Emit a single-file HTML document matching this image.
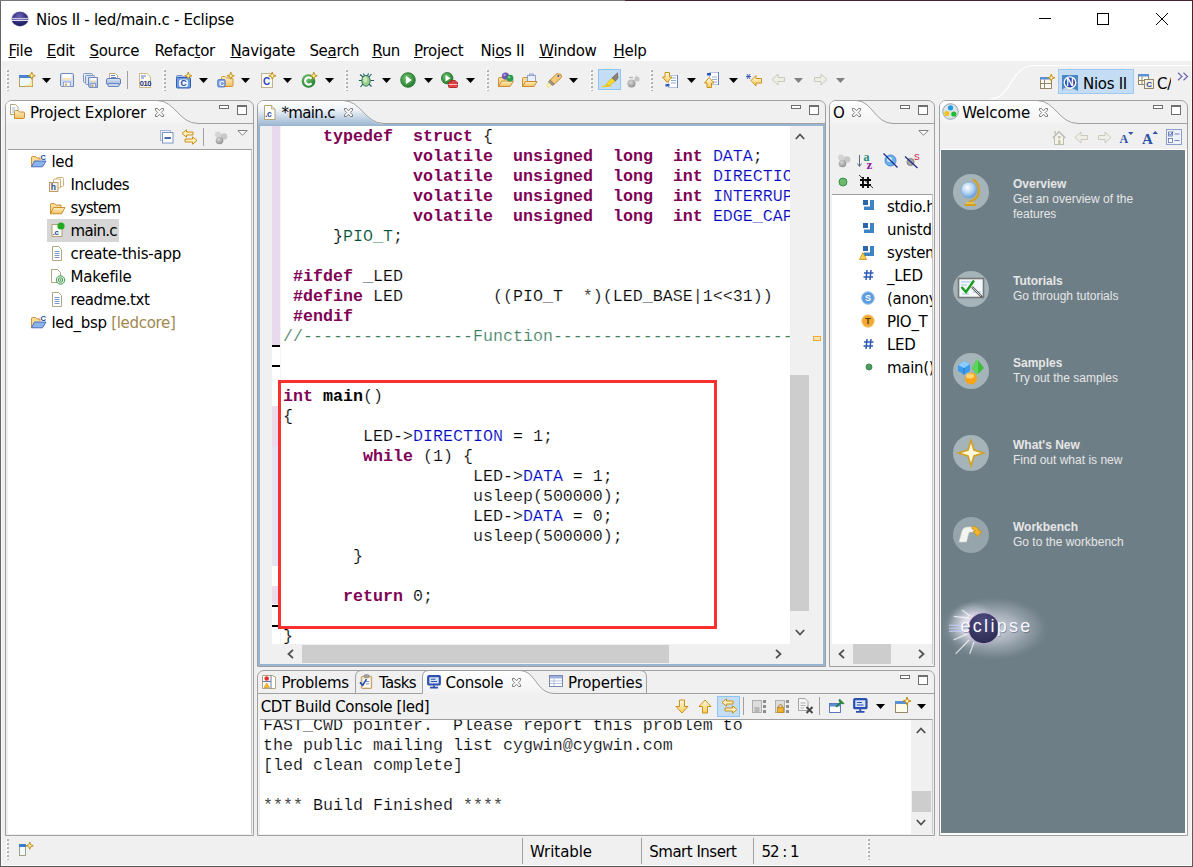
<!DOCTYPE html>
<html lang="en">
<head>
<meta charset="utf-8">
<title>Nios II - led/main.c - Eclipse</title>
<style>
html,body{margin:0;padding:0}
body{width:1193px;height:867px;position:relative;overflow:hidden;background:#f0f0f0;font-family:"DejaVu Sans","Liberation Sans",sans-serif;font-size:15px;letter-spacing:-0.3px;color:#000}
.a{position:absolute}
.t{position:absolute;white-space:pre;line-height:20px;height:20px}
.u{text-decoration:underline;text-underline-offset:1px;text-decoration-thickness:1px}
svg{position:absolute;overflow:visible}
.mono{font-family:"Liberation Mono",monospace;font-size:16.67px;line-height:20px;white-space:pre;letter-spacing:0}
.mono{-webkit-text-stroke:0.2px #fff}.mono b,.kw{-webkit-text-stroke:0}
.kw{color:#7f0055;font-weight:bold}
.fd{color:#0000c0}
.cm{color:#3f7f5f}
.ty{color:#005032}
.pnl{position:absolute;border:1px solid #a0a0a0;box-sizing:border-box;background:#f0f0f0}
.wt{position:absolute;white-space:pre;font-family:"Liberation Sans",sans-serif;font-size:12px;line-height:15px;color:#e6e6e6;letter-spacing:0}
.wt b{font-weight:bold}
</style>
</head>
<body>
<!-- ===== window frame / title / menu ===== -->
<div class="a" id="titlebg" style="left:1px;top:1px;width:1191px;height:60px;background:#fff"></div>
<!-- title bar -->
<svg style="left:10px;top:10px" width="20" height="18" viewBox="0 0 20 18">
<defs><radialGradient id="eg" cx="0.45" cy="0.3" r="0.8"><stop offset="0" stop-color="#6a62b8"/><stop offset="0.6" stop-color="#2c2a78"/><stop offset="1" stop-color="#1a1850"/></radialGradient></defs>
<ellipse cx="10" cy="9" rx="9" ry="7.8" fill="#c9b6d6" opacity=".55"/>
<ellipse cx="10" cy="9" rx="8.3" ry="7.2" fill="url(#eg)"/>
<rect x="1.5" y="7.9" width="17" height="0.9" fill="#e4e0f2"/><rect x="1.4" y="9.7" width="17.2" height="1.2" fill="#f6f4fc"/>
</svg>
<div class="t" id="ttl" style="left:36px;top:10px">Nios II - led/main.c - Eclipse</div>
<svg style="left:1030px;top:8px" width="150" height="24" viewBox="0 0 150 24" fill="none" stroke="#000" stroke-width="1">
<path d="M9 10.5H21"/><rect x="67.5" y="5.5" width="11" height="11"/><path d="M126 5L138 17M138 5L126 17"/>
</svg>

<!-- menu bar -->
<div class="t mi" id="m0" style="left:8.5px;top:41px"><span class="u">F</span>ile</div>
<div class="t mi" id="m1" style="left:46.8px;top:41px"><span class="u">E</span>dit</div>
<div class="t mi" id="m2" style="left:89.5px;top:41px"><span class="u">S</span>ource</div>
<div class="t mi" id="m3" style="left:154.4px;top:41px">Refac<span class="u">t</span>or</div>
<div class="t mi" id="m4" style="left:230.4px;top:41px"><span class="u">N</span>avigate</div>
<div class="t mi" id="m5" style="left:309.4px;top:41px">Se<span class="u">a</span>rch</div>
<div class="t mi" id="m6" style="left:372.2px;top:41px"><span class="u">R</span>un</div>
<div class="t mi" id="m7" style="left:414px;top:41px"><span class="u">P</span>roject</div>
<div class="t mi" id="m8" style="left:480.4px;top:41px">Ni<span class="u">o</span>s II</div>
<div class="t mi" id="m9" style="left:539.2px;top:41px"><span class="u">W</span>indow</div>
<div class="t mi" id="m10" style="left:613.6px;top:41px"><span class="u">H</span>elp</div>

<!--TB0-->
<!-- ===== main toolbar ===== -->
<svg width="0" height="0" style="left:0;top:0">
<defs>
<symbol id="grip" viewBox="0 0 4 23"><g fill="#fff"><rect x="0" y="0" width="2" height="2"/><rect x="0" y="4" width="2" height="2"/><rect x="0" y="8" width="2" height="2"/><rect x="0" y="12" width="2" height="2"/><rect x="0" y="16" width="2" height="2"/><rect x="0" y="20" width="2" height="2"/></g><g fill="#b2b2b2"><rect x="1" y="1" width="2" height="2"/><rect x="1" y="5" width="2" height="2"/><rect x="1" y="9" width="2" height="2"/><rect x="1" y="13" width="2" height="2"/><rect x="1" y="17" width="2" height="2"/><rect x="1" y="21" width="2" height="1"/></g></symbol>
<symbol id="dd" viewBox="0 0 9 5"><path d="M0 0H9L4.5 5Z" fill="#000"/></symbol>
<symbol id="ddg" viewBox="0 0 9 5"><path d="M0 0H9L4.5 5Z" fill="#808080"/></symbol>
<symbol id="star" viewBox="0 0 8 8"><path d="M4 0L5 3L8 4L5 5L4 8L3 5L0 4L3 3Z" fill="#fff2a8" stroke="#b8860b" stroke-width="0.9"/></symbol>
<linearGradient id="gfold" x1="0" y1="0" x2="0" y2="1"><stop offset="0" stop-color="#fdf0c4"/><stop offset="1" stop-color="#f0c060"/></linearGradient>
<linearGradient id="gblue" x1="0" y1="0" x2="0" y2="1"><stop offset="0" stop-color="#dfe8f6"/><stop offset="1" stop-color="#9db4dc"/></linearGradient>
<radialGradient id="ggreen" cx="0.4" cy="0.35" r="0.7"><stop offset="0" stop-color="#6ec46e"/><stop offset="1" stop-color="#1f7a2a"/></radialGradient>
<linearGradient id="garrow" x1="0" y1="0" x2="0" y2="1"><stop offset="0" stop-color="#fffbe0"/><stop offset="1" stop-color="#f8cc58"/></linearGradient>
<radialGradient id="ggray" cx="0.4" cy="0.35" r="0.7"><stop offset="0" stop-color="#d8d8d8"/><stop offset="1" stop-color="#8c8c8c"/></radialGradient>
</defs>
</svg>
<svg style="left:6px;top:69px" width="4" height="23"><use href="#grip"/></svg>
<svg style="left:163px;top:69px" width="4" height="23"><use href="#grip"/></svg>
<svg style="left:345px;top:69px" width="4" height="23"><use href="#grip"/></svg>
<svg style="left:486px;top:69px" width="4" height="23"><use href="#grip"/></svg>
<svg style="left:590px;top:69px" width="4" height="23"><use href="#grip"/></svg>
<svg style="left:650px;top:69px" width="4" height="23"><use href="#grip"/></svg>
<!-- new -->
<svg style="left:18px;top:72px" width="17" height="16" viewBox="0 0 17 16"><rect x="1.500" y="3.500" width="13" height="11" fill="#eefaff" stroke="#b89c58"/><rect x="1" y="3" width="14" height="3" fill="#4a84d0"/><path d="M14 7V14H7C11 14 14 11 14 7Z" fill="#fff8d0" stroke="#f0d060" stroke-width=".6"/><use href="#star" x="10" y="0" width="7.500" height="7.500"/></svg>
<svg style="left:42px;top:78px" width="9" height="5"><use href="#dd"/></svg>
<!-- save -->
<svg style="left:59px;top:72px" width="16" height="16" viewBox="0 0 16 16"><path d="M1.500 2.500Q1.500 1.500 2.500 1.500H13.500Q14.500 1.500 14.500 2.500V14.500H2.500L1.500 13.500Z" fill="#d4def0" stroke="#6f88bc"/><rect x="3.500" y="2" width="9" height="6" fill="#fff"/><rect x="3.500" y="6.300" width="9" height="1.300" fill="#ecd4a0"/><rect x="4.500" y="10" width="7" height="4.500" fill="#f4f7fc" stroke="#7f96c4" stroke-width=".8"/><rect x="6" y="11.500" width="2" height="3" fill="#d4b470"/></svg>
<!-- save all -->
<svg style="left:83px;top:72px" width="16" height="16" viewBox="0 0 16 16"><rect x=".5" y="1.5" width="9" height="9" rx="1" fill="#e4ebf7" stroke="#7f96c4"/><rect x="2.5" y="3.5" width="9" height="9" rx="1" fill="#dbe4f4" stroke="#7f96c4"/><path d="M5.5 5.5H14.5V15.500H6.5L5.500 14.500Z" fill="url(#gblue)" stroke="#6f88bc"/><rect x="7.500" y="6" width="5.500" height="3.500" fill="#fff"/><rect x="7.500" y="8.600" width="5.500" height="1" fill="#e9c98a"/><rect x="8" y="11.500" width="4.500" height="3.800" fill="#e8eef8" stroke="#6f88bc" stroke-width=".7"/><rect x="9" y="12.500" width="1.500" height="2.800" fill="#caa45a"/></svg>
<!-- print -->
<svg style="left:105px;top:72px" width="17" height="16" viewBox="0 0 17 16"><path d="M4.500 7V1.500H10.500L12.500 3.500V7" fill="#fff" stroke="#b8a070" stroke-width=".9"/><path d="M6 3.500H10M6 5.500H11" stroke="#5a78b8" stroke-width=".9"/><rect x="1.500" y="6.500" width="14" height="6" rx="1.500" fill="url(#gblue)" stroke="#5f7cb8"/><rect x="3" y="11.500" width="11" height="3" rx="1" fill="#c8d6ee" stroke="#5f7cb8" stroke-width=".9"/></svg>
<div class="a" style="left:127px;top:71px;width:1px;height:18px;background:#a0a0a0"></div>
<!-- 010 -->
<svg style="left:138px;top:72px" width="14" height="17" viewBox="0 0 14 17"><path d="M1.500 1.500H9L12.500 5V15.500H1.500Z" fill="#fdfcf4" stroke="#c8b078" stroke-width=".9"/><path d="M3 4H8M3 6H6" stroke="#5a78c8" stroke-width="1"/><text x="1.8" y="14.3" font-family="Liberation Sans,sans-serif" font-weight="bold" font-size="7.5" fill="#1c2c74" letter-spacing="-.4">010</text></svg>
<!-- new c project -->
<svg style="left:175px;top:72px" width="17" height="17" viewBox="0 0 17 17"><path d="M1.500 6V4.500Q1.500 3.500 2.500 3.500H7L8.500 5H12" fill="#b4c8ec" stroke="#5878c0" stroke-width=".8"/><rect x="1.500" y="5.500" width="14" height="10.500" rx="1" fill="#6c9ce4" stroke="#2f5cb4"/><rect x="4" y="7.500" width="9" height="7.500" rx="2" fill="#eef4fd"/><text x="5.500" y="14.200" font-family="Liberation Sans,sans-serif" font-weight="bold" font-size="8.500" fill="#1c4a9c">C</text><use href="#star" x="9.500" y="0" width="7.500" height="7.500"/></svg>
<svg style="left:199px;top:78px" width="9" height="5"><use href="#dd"/></svg>
<!-- new c folder -->
<svg style="left:217px;top:72px" width="18" height="17" viewBox="0 0 18 17"><path d="M4.500 14.500V5.500Q4.500 4.500 5.500 4.500H8L9.500 6H15Q16 6 16 7V13.500Q16 14.500 15 14.500Z" fill="url(#gfold)" stroke="#d08a28" stroke-width=".9"/><rect x=".7" y="7.500" width="7.500" height="7.500" rx="1.200" fill="#7c9ee0" stroke="#4c70c0" stroke-width=".8"/><text x="2" y="13.800" font-family="Liberation Sans,sans-serif" font-weight="bold" font-size="7.500" fill="#fff">C</text><use href="#star" x="10" y="0" width="7.500" height="7.500"/></svg>
<svg style="left:241px;top:78px" width="9" height="5"><use href="#dd"/></svg>
<!-- new c file -->
<svg style="left:260px;top:72px" width="17" height="17" viewBox="0 0 17 17"><rect x="1.500" y="1.500" width="11" height="14" fill="#fdfcf0" stroke="#b8aa88" stroke-width=".9"/><text x="3" y="12.800" font-family="Liberation Sans,sans-serif" font-weight="bold" font-size="10" fill="#2a44c8">C</text><use href="#star" x="8.500" y="0" width="7.500" height="7.500"/></svg>
<svg style="left:283px;top:78px" width="9" height="5"><use href="#dd"/></svg>
<!-- new class -->
<svg style="left:301px;top:72px" width="17" height="17" viewBox="0 0 17 17"><circle cx="7.500" cy="9" r="6.800" fill="url(#ggreen)"/><path d="M10.500 6.700A3.600 3.600 0 1 0 10.500 11.300" fill="none" stroke="#fff" stroke-width="2.200"/><use href="#star" x="9" y="0" width="7.500" height="7.500"/></svg>
<svg style="left:325px;top:78px" width="9" height="5"><use href="#dd"/></svg>
<!-- debug -->
<svg style="left:358px;top:72px" width="17" height="17" viewBox="0 0 17 17"><g stroke="#1d5a6a" stroke-width="1.100" fill="none"><path d="M5 5L2 2.500M11 5L13.500 2M4 8.500H.8M12.500 8.500H16M5 12L2.500 15M11 12L13.500 14.500M6.500 4L5.500 1.500M9.500 4L10.500 1.500"/></g><ellipse cx="8" cy="8.800" rx="4.200" ry="5.300" fill="#9ad08a" stroke="#2a6e5a" stroke-width="1"/><ellipse cx="7.200" cy="7.500" rx="2" ry="3" fill="#d4f0c4" opacity=".8"/></svg>
<svg style="left:382px;top:78px" width="9" height="5"><use href="#dd"/></svg>
<!-- run -->
<svg style="left:400px;top:72px" width="16" height="16" viewBox="0 0 16 16"><circle cx="8" cy="8" r="7.300" fill="url(#ggreen)" stroke="#1c6a26" stroke-width=".8"/><path d="M5.800 3.800L12 8L5.800 12.200Z" fill="#fff"/></svg>
<svg style="left:424px;top:78px" width="9" height="5"><use href="#dd"/></svg>
<!-- external tools -->
<svg style="left:441px;top:72px" width="18" height="17" viewBox="0 0 18 17"><circle cx="6.200" cy="6.200" r="5.700" fill="url(#ggreen)" stroke="#1c6a26" stroke-width=".8"/><path d="M4.500 3L9.500 6.200L4.500 9.500Z" fill="#fff"/><path d="M10 9.500V8.500H14V9.500" fill="none" stroke="#c02828" stroke-width="1.200"/><rect x="7.500" y="9.800" width="9" height="5.700" rx="1" fill="#e04848" stroke="#b02020" stroke-width=".9"/><rect x="7.500" y="12" width="9" height="1" fill="#f8c0c0"/></svg>
<svg style="left:466px;top:78px" width="9" height="5"><use href="#dd"/></svg>
<!-- open type -->
<svg style="left:497px;top:72px" width="18" height="16" viewBox="0 0 18 16"><path d="M1.500 14.500V6.500Q1.500 5.500 2.500 5.500H6L7.500 7H13.500V9" fill="#f8dc98" stroke="#c88424" stroke-width=".9"/><path d="M1.500 14.500L4.500 9H16.500L13 14.500Z" fill="url(#gfold)" stroke="#c88424" stroke-width=".9"/><circle cx="8.500" cy="4" r="3.600" fill="#6c56b8"/><circle cx="7.600" cy="3" r="1.300" fill="#a898e0"/><circle cx="13" cy="6.200" r="3.400" fill="#2c9a4c"/><circle cx="12.200" cy="5.300" r="1.200" fill="#7cd090"/></svg>
<!-- open task -->
<svg style="left:521px;top:72px" width="17" height="16" viewBox="0 0 17 16"><path d="M1.500 14.500V6.500Q1.500 5.500 2.500 5.500H6L7.500 7H13.500V9" fill="#f8dc98" stroke="#c88424" stroke-width=".9"/><rect x="6.500" y="3.500" width="8" height="6" fill="#e8eefa" stroke="#8a9cc8" stroke-width=".9"/><path d="M8.500 3.500V2H12.500V3.500" fill="none" stroke="#8a9cc8"/><path d="M1.500 14.500L4.500 9.500H16L13 14.500Z" fill="url(#gfold)" stroke="#c88424" stroke-width=".9"/></svg>
<!-- search -->
<svg style="left:545px;top:72px" width="18" height="17" viewBox="0 0 18 17"><path d="M1.500 14L3 15.500L8.500 10.500L5.500 8Z" fill="#fff8c8" stroke="#e8d060" stroke-width=".8"/><path d="M5 8L12 1.500L16 2.500L16.500 5.500L9.500 12Z" fill="#f4c878" stroke="#c08830" stroke-width=".9"/><path d="M4.800 8.200L9.300 12.200L7.500 13.500L3.500 10Z" fill="#a09890" stroke="#786c60" stroke-width=".7"/><circle cx="13.300" cy="4" r="1" fill="#3858b8"/></svg>
<svg style="left:569px;top:78px" width="9" height="5"><use href="#dd"/></svg>
<!-- toggle mark occurrences (selected) -->
<div class="a" style="left:598px;top:69px;width:23px;height:21px;box-sizing:border-box;background:#c4ddf4;border:1px solid #8cc4f4"></div>
<svg style="left:601px;top:72px" width="18" height="16" viewBox="0 0 18 16"><path d="M1 14.500Q5 14.800 10 13.500" fill="none" stroke="#f0cc20" stroke-width="1.600"/><path d="M4.500 13L11 6L14.500 9L8 13.500Z" fill="#fadc30" stroke="#d8b010" stroke-width=".7"/><path d="M11 6L16.500 .8L17 6L14.500 9Z" fill="#8c8478" stroke="#6c6458" stroke-width=".7"/></svg>
<!-- gray balls -->
<svg style="left:627px;top:75px" width="13" height="13" viewBox="0 0 13 13"><circle cx="4.500" cy="8.500" r="4" fill="url(#ggray)"/><path d="M2 2.500H6" stroke="#b0b0b0" stroke-width="1.200"/><circle cx="10" cy="4" r="2.600" fill="#c4c4c4"/><circle cx="9" cy="1.500" r="1" fill="#d0d0d0"/></svg>
<!-- next annotation -->
<svg style="left:662px;top:71px" width="17" height="18" viewBox="0 0 17 18"><rect x="6.500" y="4.500" width="9" height="12" fill="#fff" stroke="#a8b8d8" stroke-width=".8"/><path d="M9 7H14M9 9.500H14M9 12H14" stroke="#8aa0d0" stroke-width=".9"/><rect x="3.500" y="13" width="4" height="2.500" fill="#2c5cc0"/><path d="M15.500 4V17" stroke="#5878c0" stroke-width=".9"/><path d="M3 1.500H7.500V6H10L5.200 11.500L.5 6H3Z" fill="url(#garrow)" stroke="#c8860c" stroke-width=".9"/></svg>
<svg style="left:687px;top:78px" width="9" height="5"><use href="#dd"/></svg>
<!-- prev annotation -->
<svg style="left:704px;top:71px" width="17" height="18" viewBox="0 0 17 18"><rect x="5.500" y="1.500" width="9" height="12" fill="#fff" stroke="#a8b8d8" stroke-width=".8"/><path d="M8 6H13M8 8.500H13M8 11H13" stroke="#8aa0d0" stroke-width=".9"/><rect x="3" y="2" width="4" height="2.500" fill="#2c5cc0"/><path d="M14.500 1V14" stroke="#5878c0" stroke-width=".9"/><path d="M3 16.500H7.500V12H10L5.200 6.500L.5 12H3Z" fill="url(#garrow)" stroke="#c8860c" stroke-width=".9"/></svg>
<svg style="left:729px;top:78px" width="9" height="5"><use href="#dd"/></svg>
<!-- last edit location -->
<svg style="left:745px;top:73px" width="18" height="14" viewBox="0 0 18 14"><path d="M6 7.500L11 2.500V5.500H16.500V10H11V13Z" fill="url(#garrow)" stroke="#c8860c" stroke-width=".9"/><path d="M1 3.500H6M2 1L5 6M5 1L2 6" stroke="#2c4cb0" stroke-width=".9"/></svg>
<!-- back / forward disabled -->
<svg style="left:771px;top:73px" width="15" height="13" viewBox="0 0 15 13"><path d="M1 6.500L7 1V4.500H13.500V8.500H7V12Z" fill="#eeeee6" stroke="#c4c4b8" stroke-width=".9"/></svg>
<svg style="left:794px;top:78px" width="9" height="5"><use href="#ddg"/></svg>
<svg style="left:813px;top:73px" width="15" height="13" viewBox="0 0 15 13"><path d="M14 6.500L8 1V4.500H1.500V8.500H8V12Z" fill="#eeeee6" stroke="#c4c4b8" stroke-width=".9"/></svg>
<svg style="left:836px;top:78px" width="9" height="5"><use href="#ddg"/></svg>
<!-- perspective switcher -->
<svg style="left:990px;top:61px" width="202" height="40" viewBox="0 0 202 40" fill="none"><path d="M0 38C22 38 20 4.500 44 4.500H201" stroke="#fff" stroke-width="1.200"/></svg>
<svg style="left:1039px;top:74px" width="16" height="16" viewBox="0 0 16 16"><rect x="1.500" y="3.500" width="11" height="11" fill="#fbfaf2" stroke="#8a7c5c" stroke-width=".9"/><rect x="1" y="3" width="12" height="2.500" fill="#5b8fd6"/><path d="M5.500 5.500V14.500M1.500 9.500H12.500" stroke="#8a7c5c" stroke-width=".9"/><use href="#star" x="8.500" y="0" width="7.500" height="7.500"/></svg>
<div class="a" style="left:1058px;top:69px;width:76px;height:25px;box-sizing:border-box;background:#c4ddf4;border:1px solid #9ccaf2"></div>
<svg style="left:1062px;top:75px" width="16" height="16" viewBox="0 0 17 17"><rect x="0" y="0" width="17" height="17" fill="#4c86c4"/><path d="M0 17Q2 9 17 17Z" fill="#bcd4ec"/><circle cx="8.500" cy="8" r="6.800" fill="#fff"/><circle cx="8.500" cy="8" r="5.300" fill="#1c3ca8"/><text x="4.600" y="12" font-family="Liberation Sans,sans-serif" font-weight="bold" font-size="11" fill="#fff">N</text></svg>
<div class="t" id="pnios" style="left:1083px;top:74px">Nios II</div>
<svg style="left:1138px;top:73px" width="16" height="16" viewBox="0 0 16 16"><rect x=".5" y="1.500" width="10" height="10" fill="#fbfaf2" stroke="#8a7c5c" stroke-width=".9"/><rect x="0" y="1" width="11" height="2.500" fill="#5b8fd6"/><path d="M4 3.500V11.500M.5 7.500H10.500" stroke="#8a7c5c" stroke-width=".9"/><rect x="6.500" y="6.500" width="9" height="9" fill="#f4f0dc" stroke="#8a7c5c" stroke-width=".9"/><text x="8.300" y="14.300" font-family="Liberation Sans,sans-serif" font-weight="bold" font-size="8" fill="#2a44a8">C</text></svg>
<div class="t" id="pcc" style="left:1157px;top:74px;width:14px;overflow:hidden">C/C++</div>
<svg style="left:1177px;top:72px" width="12" height="9" viewBox="0 0 12 9" fill="none" stroke="#6a68b0" stroke-width="1.200"><path d="M1 .8L5 4.500L1 8.200M6.500 .8L10.500 4.500L6.500 8.200"/></svg>
<!--TB1-->
<!--EX0-->
<!-- ===== Project Explorer ===== -->
<svg width="0" height="0" style="left:0;top:0"><defs>
<linearGradient id="gtab" x1="0" y1="0" x2="0" y2="1"><stop offset="0" stop-color="#ffffff"/><stop offset="1" stop-color="#f2f2f2"/></linearGradient>
<linearGradient id="gtaba" x1="0" y1="0" x2="0" y2="1"><stop offset="0" stop-color="#ffffff"/><stop offset=".35" stop-color="#eef3f9"/><stop offset="1" stop-color="#99b4d1"/></linearGradient>
<symbol id="vx" viewBox="0 0 11 11"><path d="M1.500 1.500L3.500 1.500L5.500 3.800L7.500 1.500L9.500 1.500L9.500 3.200L7.300 5.500L9.500 7.800L9.500 9.500L7.500 9.500L5.500 7.200L3.500 9.500L1.500 9.500L1.500 7.800L3.700 5.500L1.500 3.200Z" fill="#fff" stroke="#6e6e6e" stroke-width=".9"/></symbol>
<symbol id="vmin" viewBox="0 0 10 5"><rect x=".5" y=".5" width="9" height="3" fill="#fff" stroke="#6e6e6e"/></symbol>
<symbol id="vmax" viewBox="0 0 11 11"><rect x=".5" y=".5" width="9" height="9" fill="#fff" stroke="#6e6e6e"/><rect x="0" y="0" width="10" height="2" fill="#6e6e6e"/></symbol>
<symbol id="vmenu" viewBox="0 0 11 6"><path d="M.8 .5H10.200L5.500 5.200Z" fill="#fff" stroke="#6e6e6e" stroke-width=".9"/></symbol>
<symbol id="cprj" viewBox="0 0 17 14"><path d="M1.500 12.500V3.500Q1.500 2.500 2.500 2.500H5.500L7 4H10V6" fill="#f8dc98" stroke="#c88424" stroke-width=".9"/><path d="M1.500 12.800L4.500 7H16L12.500 12.800Z" fill="#8cb4ec" stroke="#3c64b8" stroke-width=".9"/><text x="10.500" y="5.500" font-family="Liberation Sans,sans-serif" font-weight="bold" font-size="7.500" fill="#1c4a9c">C</text></symbol>
<symbol id="txtf" viewBox="0 0 12 15"><path d="M1.500 .5H7.500L10.500 3.500V14.500H1.500Z" fill="#fff" stroke="#a89c78" stroke-width=".9"/><path d="M3.500 5.500H8.500M3.500 7.500H8.500M3.500 9.500H8.500M3.500 11.500H8.500" stroke="#7c98d0" stroke-width="1"/></symbol>
</defs></svg>
<div class="pnl" style="left:5px;top:100px;width:249px;height:736px;border-radius:7px 7px 0 0"></div>
<svg style="left:5px;top:100px" width="249" height="25" viewBox="0 0 249 25"><path d="M1 24V7Q1 1 7 1H152C170 1 174 23.500 193 23.500H1Z" fill="url(#gtab)"/><path d="M152 .5C170 .5 174 23.500 193 23.500H248.500" fill="none" stroke="#a0a0a0"/></svg>
<div class="a" style="left:8px;top:149px;width:244px;height:685px;background:#fff;border-top:1px solid #a0a0a0;border-right:1px solid #c8c8c8;box-sizing:border-box"></div>
<svg style="left:10px;top:104px" width="16" height="16" viewBox="0 0 16 16"><path d="M.5 .5H5.500L8 3V10.500H.5Z" fill="#fff" stroke="#a89c78" stroke-width=".9"/><path d="M2 4H5M2 6H5M2 8H4" stroke="#8ca4d8" stroke-width=".8"/><path d="M4.500 14.500V7.500Q4.500 6.500 5.500 6.500H8L9.500 8H13.500Q14.500 8 14.500 9V13.500Q14.500 14.500 13.500 14.500Z" fill="url(#gfold)" stroke="#c88424" stroke-width=".9"/></svg>
<div class="t" id="pe" style="left:30px;top:103px;letter-spacing:-0.16px">Project Explorer</div>
<svg style="left:154px;top:107px" width="11" height="11"><use href="#vx"/></svg>
<svg style="left:219px;top:105px" width="10" height="5"><use href="#vmin"/></svg>
<svg style="left:237px;top:105px" width="11" height="11"><use href="#vmax"/></svg>
<!-- view toolbar -->
<svg style="left:160px;top:130px" width="14" height="14" viewBox="0 0 14 14"><rect x=".5" y=".5" width="10" height="10" fill="#eef2fa" stroke="#a8b8d8"/><rect x="2.500" y="2.500" width="10.500" height="10.500" fill="#fff" stroke="#7c94c4"/><path d="M4.500 8H11" stroke="#1c4a9c" stroke-width="1.600"/></svg>
<svg style="left:181px;top:129px" width="17" height="17" viewBox="0 0 17 17"><path d="M1 4.500L5.500 .8V3H12V6H5.500V8.200Z" fill="#fdf0b8" stroke="#c8860c" stroke-width=".9"/><path d="M16 11.500L11.500 7.800V10H4V13H11.500V15.200Z" fill="#fdf0b8" stroke="#c8860c" stroke-width=".9"/></svg>
<div class="a" style="left:203px;top:128px;width:1px;height:18px;background:#a0a0a0"></div>
<svg style="left:214px;top:131px" width="14" height="14" viewBox="0 0 14 14"><circle cx="4" cy="3.500" r="3" fill="#d4d4d4"/><circle cx="10" cy="5.500" r="3.300" fill="#c8c8c8"/><circle cx="5.500" cy="9.500" r="3.800" fill="url(#ggray)"/></svg>
<svg style="left:237px;top:130px" width="11" height="6"><use href="#vmenu"/></svg>
<!-- tree -->
<div class="a" style="left:47px;top:219px;width:72px;height:23px;background:#d6d6d6"></div>
<svg style="left:30px;top:154px" width="17" height="14"><use href="#cprj"/></svg>
<div class="t" style="left:51.500px;top:152px">led</div>
<svg style="left:49px;top:177px" width="16" height="15" viewBox="0 0 16 15"><rect x="7.500" y=".5" width="7" height="9" rx="1" fill="#fff" stroke="#c8a868" stroke-width=".9"/><rect x="4.500" y="2" width="7" height="9" rx="1" fill="#fff" stroke="#c8a868" stroke-width=".9"/><rect x=".5" y="5.500" width="8.500" height="9" fill="#f4f0e4" stroke="#b8925c" stroke-width=".9"/><text x="1.800" y="13" font-family="Liberation Sans,sans-serif" font-weight="bold" font-size="8.500" fill="#34508c">h</text></svg>
<div class="t" style="left:70.6px;top:175px;letter-spacing:-0.48px">Includes</div>
<svg style="left:49px;top:202px" width="17" height="13" viewBox="0 0 17 13"><path d="M1.500 11.500V2.500Q1.500 1.500 2.500 1.500H5.500L7 3H12V5.500" fill="#f8dc98" stroke="#c88424" stroke-width=".9"/><path d="M1.500 11.800L4.500 5.500H16L12.500 11.800Z" fill="url(#gfold)" stroke="#c88424" stroke-width=".9"/></svg>
<div class="t" style="left:70.6px;top:198px;letter-spacing:-0.76px">system</div>
<svg style="left:50px;top:222px" width="15" height="16" viewBox="0 0 15 16"><rect x="2" y="2.500" width="10" height="12" fill="#fdfcf4" stroke="#b09868" stroke-width=".9"/><text x="2.500" y="12.500" font-family="Liberation Sans,sans-serif" font-weight="bold" font-size="8" fill="#2c4c9c">.c</text><circle cx="11" cy="4" r="3.600" fill="#22aa22"/></svg>
<div class="t" style="left:70.6px;top:221px;letter-spacing:-0.72px">main.c</div>
<svg style="left:51px;top:246px" width="12" height="15"><use href="#txtf"/></svg>
<div class="t" style="left:70.6px;top:244px;letter-spacing:-0.24px">create-this-app</div>
<svg style="left:50px;top:269px" width="16" height="16" viewBox="0 0 16 16"><path d="M1.500 .5H7.500L10.500 3.500V13.500H1.500Z" fill="#fff" stroke="#a89c78" stroke-width=".9"/><circle cx="10.500" cy="11" r="4.200" fill="#e8f4e8" stroke="#2c8c3c" stroke-width=".9"/><circle cx="10.500" cy="11" r="2.200" fill="none" stroke="#2c8c3c" stroke-width=".9"/><circle cx="10.500" cy="11" r=".8" fill="#2c8c3c"/></svg>
<div class="t" style="left:70.6px;top:267px;letter-spacing:-0.18px">Makefile</div>
<svg style="left:51px;top:292px" width="12" height="15"><use href="#txtf"/></svg>
<div class="t" style="left:70.6px;top:290px;letter-spacing:-0.42px">readme.txt</div>
<svg style="left:30px;top:315px" width="17" height="14"><use href="#cprj"/></svg>
<div class="t" style="left:51.500px;top:313px">led_bsp <span style="color:#a08850">[ledcore]</span></div>
<!--EX1-->
<!--ED0-->
<!-- ===== editor ===== -->
<div class="pnl" style="left:257px;top:100px;width:569px;height:567px;border-radius:7px 7px 0 0;background:#f0f0f0"></div>
<div class="a" style="left:258px;top:124px;width:567px;height:542px;box-sizing:border-box;border:2px solid #99b4d1;background:#f0f0f0"></div>
<svg style="left:257px;top:100px" width="569" height="26" viewBox="0 0 569 26"><path d="M1 26V7Q1 1 7 1H86C104 1 108 24 127 24H568V26Z" fill="url(#gtaba)"/><path d="M127 24H568V26H127Z" fill="#99b4d1"/><path d="M86 .5C104 .5 108 23.500 127 23.500H568" fill="none" stroke="#a0a0a0"/></svg>
<svg style="left:264px;top:105px" width="12" height="15" viewBox="0 0 12 15"><path d="M.5 .5H7.500L11 4V14.500H.5Z" fill="#fdfcf6" stroke="#b09868" stroke-width=".9"/><path d="M7.500 .5V4H11" fill="#f0e4c4" stroke="#b09868" stroke-width=".7"/><text x="1" y="11.500" font-family="Liberation Sans,sans-serif" font-weight="bold" font-size="8.500" fill="#2c4c9c">.c</text></svg>
<div class="t" id="edtab" style="left:281.4px;top:103px;letter-spacing:-0.63px">*main.c</div>
<svg style="left:343px;top:107px" width="11" height="11"><use href="#vx"/></svg>
<svg style="left:791px;top:105px" width="10" height="5"><use href="#vmin"/></svg>
<svg style="left:809px;top:105px" width="11" height="11"><use href="#vmax"/></svg>
<div class="a" style="left:272px;top:126px;width:518px;height:518px;background:#fff;overflow:hidden">
<div class="a" style="left:0;top:0px;width:8px;height:220px;background:#e9d9ec"></div>
<div class="a" style="left:0;top:280px;width:8px;height:40px;background:#ecdcec"></div>
<div class="a" style="left:0;top:320px;width:8px;height:120px;background:#e4e4f2"></div>
<div class="a" style="left:0;top:460px;width:8px;height:18px;background:#ecdcec"></div>
<div class="a" style="left:0;top:219px;width:8px;height:2px;background:#000"></div>
<div class="a" style="left:0;top:239px;width:8px;height:2px;background:#000"></div>
<div class="a" style="left:0;top:479px;width:8px;height:2px;background:#000"></div>
<div class="a" style="left:0;top:499px;width:8px;height:2px;background:#000"></div>
<div class="a" style="left:8px;top:0;width:1px;height:518px;background:#f4f4f4"></div>
<pre class="mono a" id="code" style="left:11px;top:1px;margin:0">    <span class="kw">typedef</span>  <span class="kw">struct</span> {
             <span class="kw">volatile</span>  <span class="kw">unsigned</span>  <span class="kw">long</span>  <span class="kw">int</span> <span class="fd">DATA</span>;
             <span class="kw">volatile</span>  <span class="kw">unsigned</span>  <span class="kw">long</span>  <span class="kw">int</span> <span class="fd">DIRECTION</span>;
             <span class="kw">volatile</span>  <span class="kw">unsigned</span>  <span class="kw">long</span>  <span class="kw">int</span> <span class="fd">INTERRUPT_MASK</span>;
             <span class="kw">volatile</span>  <span class="kw">unsigned</span>  <span class="kw">long</span>  <span class="kw">int</span> <span class="fd">EDGE_CAPTURE</span>;
     }<span class="ty">PIO_T</span>;

 <span class="kw">#ifdef</span> _LED
 <span class="kw">#define</span> LED         ((PIO_T  *)(LED_BASE|1&lt;&lt;31))
 <span class="kw">#endif</span>
<span class="cm">//-----------------Function----------------------------------------</span>


<span class="kw">int</span> <b>main</b>()
{
        LED-&gt;<span class="fd">DIRECTION</span> = 1;
        <span class="kw">while</span> (1) {
                   LED-&gt;<span class="fd">DATA</span> = 1;
                   usleep(500000);
                   LED-&gt;<span class="fd">DATA</span> = 0;
                   usleep(500000);
       }

      <span class="kw">return</span> 0;

}</pre>
<div class="a" style="left:6px;top:254px;width:439px;height:249px;box-sizing:border-box;border:3px solid #f93030"></div>
</div>
<div class="a" style="left:790px;top:375px;width:19px;height:236px;background:#cdcdcd"></div>
<svg style="left:795px;top:133px" width="10" height="7" viewBox="0 0 10 7"><path d="M.8 6L5 1.500L9.200 6" fill="none" stroke="#505050" stroke-width="1.800"/></svg>
<svg style="left:795px;top:629px" width="10" height="7" viewBox="0 0 10 7"><path d="M.8 1L5 5.500L9.200 1" fill="none" stroke="#505050" stroke-width="1.800"/></svg>
<div class="a" style="left:302px;top:645px;width:367px;height:18px;background:#cdcdcd"></div>
<svg style="left:287px;top:649px" width="7" height="10" viewBox="0 0 7 10"><path d="M6 .8L1.500 5L6 9.200" fill="none" stroke="#505050" stroke-width="1.800"/></svg>
<svg style="left:775px;top:649px" width="7" height="10" viewBox="0 0 7 10"><path d="M1 .8L5.500 5L1 9.200" fill="none" stroke="#505050" stroke-width="1.800"/></svg>
<div class="a" style="left:813px;top:336px;width:8px;height:5px;box-sizing:border-box;border:1px solid #f0a830;background:#fbe4b0"></div>
<!--ED1-->
<!--OU0-->
<!-- ===== Outline ===== -->
<div class="pnl" style="left:829px;top:100px;width:106px;height:567px;border-radius:7px 7px 0 0"></div>
<svg style="left:829px;top:100px" width="106" height="25" viewBox="0 0 106 25"><path d="M1 24V7Q1 1 7 1H27C43 1 46 23.500 64 23.500H1Z" fill="url(#gtab)"/><path d="M27 .5C43 .5 46 23.500 64 23.500H105.500" fill="none" stroke="#a0a0a0"/></svg>
<div class="t" style="left:833px;top:103px">O</div>
<svg style="left:851px;top:107px" width="11" height="11"><use href="#vx"/></svg>
<svg style="left:900px;top:105px" width="10" height="5"><use href="#vmin"/></svg>
<svg style="left:918px;top:105px" width="11" height="11"><use href="#vmax"/></svg>
<svg style="left:918px;top:130px" width="11" height="6"><use href="#vmenu"/></svg>
<!-- outline toolbar -->
<svg style="left:837px;top:154px" width="14" height="14" viewBox="0 0 14 14"><circle cx="4" cy="3.500" r="3" fill="#d4d4d4"/><circle cx="10" cy="5.500" r="3.300" fill="#c8c8c8"/><circle cx="5.500" cy="9.500" r="3.800" fill="url(#ggray)"/></svg>
<svg style="left:857px;top:152px" width="19" height="17" viewBox="0 0 19 17"><path d="M2.500 3V14M.5 11.500L2.500 14.500L4.500 11.500" fill="none" stroke="#5a6a80" stroke-width="1"/><text x="6.500" y="8.500" font-family="Liberation Serif,serif" font-weight="bold" font-size="12" fill="#1c8c7c">a</text><text x="9.500" y="16.500" font-family="Liberation Serif,serif" font-weight="bold" font-size="13" fill="#8c1c9c">z</text></svg>
<svg style="left:882px;top:152px" width="17" height="17" viewBox="0 0 17 17"><circle cx="8.500" cy="8.500" r="5.500" fill="#6cb0ec" stroke="#3c84d0" stroke-width=".9"/><circle cx="7.500" cy="7.500" r="2.500" fill="#d4ecfc"/><path d="M1.500 1.500L15.500 15.500" stroke="#1c2c8c" stroke-width="1.200"/></svg>
<svg style="left:904px;top:152px" width="17" height="17" viewBox="0 0 17 17"><circle cx="6.500" cy="10" r="3.600" fill="#a8a8a8" stroke="#787878" stroke-width=".8"/><path d="M1 4.500L13.500 16" stroke="#1c2c8c" stroke-width="1.200"/><text x="10" y="7.500" font-family="Liberation Sans,sans-serif" font-size="8.500" fill="#d0103c">S</text></svg>
<svg style="left:838px;top:177px" width="10" height="10" viewBox="0 0 10 10"><circle cx="5" cy="5" r="4" fill="#6cb86c" stroke="#2c8c3c" stroke-width=".9"/></svg>
<svg style="left:858px;top:174px" width="16" height="16" viewBox="0 0 16 16"><path d="M5 3V14M10 3V14M2 6H13M2 11H13" stroke="#000" stroke-width="1.800"/><path d="M1 1L15 14" stroke="#303030" stroke-width="1"/></svg>
<!-- outline tree -->
<div class="a" style="left:832px;top:194px;width:101px;height:470px;background:#fff;border-top:1px solid #a0a0a0;border-right:1px solid #c8c8c8;box-sizing:border-box;overflow:hidden">
<svg width="0" height="0" style="left:0;top:0"><defs>
<symbol id="oinc" viewBox="0 0 12 11"><rect x="0" y="0" width="5" height="5" fill="#2a66a8"/><path d="M7 0H11V10H1V6.500H7Z" fill="#3f83c4"/></symbol>
<symbol id="ohash" viewBox="0 0 11 12"><path d="M4 1L3 11M8 1L7 11M1 4H10.500M.5 8H10" stroke="#2c5cb4" stroke-width="1.500" fill="none"/></symbol>
</defs></svg>
<svg style="left:31px;top:5px" width="12" height="11"><use href="#oinc"/></svg><div class="t" style="left:55px;top:2px">stdio.h</div>
<svg style="left:31px;top:28px" width="12" height="11"><use href="#oinc"/></svg><div class="t" style="left:55px;top:25px">unistd.h</div>
<svg style="left:31px;top:51px" width="12" height="11"><use href="#oinc"/></svg><svg style="left:27px;top:57px" width="8" height="8" viewBox="0 0 8 8"><path d="M4 .5L7.500 7.500H.5Z" fill="#f8d048" stroke="#c88c1c" stroke-width=".8"/></svg><div class="t" style="left:55px;top:48px">system.h</div>
<svg style="left:31px;top:74px" width="11" height="12"><use href="#ohash"/></svg><div class="t" style="left:55px;top:71px">_LED</div>
<svg style="left:29px;top:96px" width="14" height="14" viewBox="0 0 14 14"><circle cx="7" cy="7" r="6.300" fill="#5c9cdc" stroke="#9cc4ec" stroke-width="1"/><text x="4" y="10.200" font-family="Liberation Sans,sans-serif" font-weight="bold" font-size="9" fill="#fff">S</text></svg><div class="t" style="left:55px;top:94px">(anonymous)</div>
<svg style="left:29px;top:119px" width="14" height="14" viewBox="0 0 14 14"><circle cx="7" cy="7" r="6.300" fill="#f0a830" stroke="#f8d48c" stroke-width="1"/><text x="4.300" y="10.200" font-family="Liberation Sans,sans-serif" font-weight="bold" font-size="9" fill="#5c3c0c">T</text></svg><div class="t" style="left:55px;top:117px">PIO_T</div>
<svg style="left:31px;top:143px" width="11" height="12"><use href="#ohash"/></svg><div class="t" style="left:55px;top:140px">LED</div>
<svg style="left:33px;top:168px" width="8" height="8" viewBox="0 0 8 8"><circle cx="4" cy="4" r="3" fill="#4c9c5c" stroke="#2c7c3c" stroke-width=".8"/></svg><div class="t" style="left:55px;top:163px">main()</div>
<div class="a" style="left:0;top:449px;width:100px;height:20px;background:#f0f0f0"></div>
<div class="a" style="left:21px;top:449px;width:38px;height:20px;background:#cdcdcd"></div>
<svg style="left:6px;top:454px" width="7" height="10" viewBox="0 0 7 10"><path d="M6 .8L1.500 5L6 9.200" fill="none" stroke="#505050" stroke-width="1.800"/></svg>
<svg style="left:86px;top:454px" width="7" height="10" viewBox="0 0 7 10"><path d="M1 .8L5.500 5L1 9.200" fill="none" stroke="#505050" stroke-width="1.800"/></svg>
</div>
<!--OU1-->
<!--WE0-->
<!-- ===== Welcome ===== -->
<div class="pnl" style="left:939px;top:100px;width:249px;height:736px;border-radius:7px 7px 0 0"></div>
<svg style="left:939px;top:100px" width="249" height="25" viewBox="0 0 249 25"><path d="M1 24V7Q1 1 7 1H98C116 1 120 23.500 139 23.500H1Z" fill="url(#gtab)"/><path d="M98 .5C116 .5 120 23.500 139 23.500H248.500" fill="none" stroke="#a0a0a0"/></svg>
<svg style="left:942px;top:103px" width="17" height="17" viewBox="0 0 17 17"><circle cx="8.500" cy="8.500" r="7.800" fill="#dce4e8" stroke="#8c9ca4" stroke-width=".9"/><circle cx="8.500" cy="4.800" r="2.600" fill="#1c9ce4"/><circle cx="4.800" cy="10.500" r="2.600" fill="#f0c420"/><circle cx="11.800" cy="11" r="2.600" fill="#1cbc2c"/></svg>
<div class="t" style="left:962.2px;top:103px;letter-spacing:-0.08px">Welcome</div>
<svg style="left:1038px;top:107px" width="11" height="11"><use href="#vx"/></svg>
<svg style="left:1153px;top:105px" width="10" height="5"><use href="#vmin"/></svg>
<svg style="left:1171px;top:105px" width="11" height="11"><use href="#vmax"/></svg>
<!-- welcome toolbar -->
<svg style="left:1052px;top:129px" width="15" height="17" viewBox="0 0 15 17"><path d="M2.500 8.500V15.500H11.500V8.500" fill="#f4f4ec" stroke="#b4b4a8" stroke-width=".9"/><path d="M.8 9L7 2.500L13.200 9" fill="none" stroke="#b4b4a8" stroke-width="1.200"/><path d="M3 2V5" stroke="#b4b4a8" stroke-width="1.200"/><rect x="6" y="11" width="2.500" height="4.500" fill="#c4c8a8"/><rect x="6" y="7" width="2.500" height="2.500" fill="#c4c8a8"/></svg>
<svg style="left:1074px;top:131px" width="15" height="13" viewBox="0 0 15 13"><path d="M1 6.500L7 1V4.500H13.500V8.500H7V12Z" fill="#eeeee6" stroke="#c4c4b8" stroke-width=".9"/></svg>
<svg style="left:1097px;top:131px" width="15" height="13" viewBox="0 0 15 13"><path d="M14 6.500L8 1V4.500H1.500V8.500H8V12Z" fill="#eeeee6" stroke="#c4c4b8" stroke-width=".9"/></svg>
<svg style="left:1119px;top:130px" width="16" height="14" viewBox="0 0 16 14"><text x=".5" y="12.500" font-family="Liberation Serif,serif" font-weight="bold" font-size="12" fill="#2c54a4">A</text><path d="M9 2H14.500L11.800 5Z" fill="#2c54a4"/></svg>
<svg style="left:1142px;top:129px" width="17" height="16" viewBox="0 0 17 16"><text x="0" y="14.500" font-family="Liberation Serif,serif" font-weight="bold" font-size="15" fill="#2c54a4">A</text><path d="M10.500 5H16L13.200 2Z" fill="#2c54a4"/></svg>
<svg style="left:1166px;top:129px" width="16" height="16" viewBox="0 0 16 16"><rect x=".5" y=".5" width="15" height="15" fill="#eef2fa" stroke="#8c9ccc"/><rect x="2.500" y="3" width="4" height="4" fill="#fff" stroke="#5c74b4" stroke-width=".8"/><rect x="2.500" y="9.500" width="4" height="4" fill="#fff" stroke="#5c74b4" stroke-width=".8"/><path d="M3 4.500L4.500 6.200L7 2.500" fill="none" stroke="#2c44a4" stroke-width=".9"/><path d="M8.500 5H13.500M8.500 11.500H13.500" stroke="#5c74b4" stroke-width=".9"/></svg>
<!-- welcome content -->
<div class="a" style="left:940px;top:149px;width:247px;height:686px;background:#fff"></div>
<div class="a" id="wel" style="left:941px;top:150px;width:244px;height:683px;background:#6d7e86;overflow:hidden">
<svg width="0" height="0" style="left:0;top:0"><defs>
<radialGradient id="gglow" cx=".5" cy=".5" r=".5"><stop offset="0" stop-color="#fff" stop-opacity="1"/><stop offset=".4" stop-color="#ece8f6" stop-opacity=".85"/><stop offset=".72" stop-color="#c4cad6" stop-opacity=".5"/><stop offset="1" stop-color="#9aa6b0" stop-opacity="0"/></radialGradient>
<radialGradient id="gglow2" cx=".5" cy=".5" r=".5"><stop offset="0" stop-color="#ececf4" stop-opacity=".8"/><stop offset=".45" stop-color="#ccd0dc" stop-opacity=".6"/><stop offset=".78" stop-color="#a8b2bc" stop-opacity=".32"/><stop offset="1" stop-color="#8c98a2" stop-opacity="0"/></radialGradient>
<radialGradient id="gglobe" cx=".4" cy=".35" r=".7"><stop offset="0" stop-color="#fff"/><stop offset=".5" stop-color="#b4d4f4"/><stop offset="1" stop-color="#5c94d4"/></radialGradient>
<radialGradient id="gorb" cx=".45" cy=".25" r=".8"><stop offset="0" stop-color="#4c4a7c"/><stop offset="1" stop-color="#2a2a52"/></radialGradient>
</defs></svg>
<svg style="left:12px;top:24px" width="36" height="36" viewBox="0 0 36 36"><circle cx="18" cy="18" r="18" fill="#a4b4b9"/><path d="M20 5.500Q28 10 25 21Q23 26 17 27" fill="none" stroke="#d4a020" stroke-width="2.200"/><circle cx="16" cy="16" r="8" fill="url(#gglobe)" stroke="#7ca4d4" stroke-width=".6"/><path d="M17 27V30M11.500 31H23" stroke="#d4a020" stroke-width="2.200"/><path d="M13 29H21" stroke="#e8c050" stroke-width="2"/></svg>
<div class="wt" style="left:72px;top:27px"><b>Overview</b>
Get an overview of the
features</div>
<svg style="left:12px;top:121px" width="36" height="36" viewBox="0 0 36 36"><circle cx="18" cy="18" r="18" fill="#a4b4b9"/><rect x="5.500" y="7.500" width="25" height="19" fill="#f4f8fc" stroke="#787878" stroke-width="1.600"/><path d="M8 11H20M8 14H14M20 21H28M9 23H16" stroke="#a4c4e4" stroke-width="1"/><path d="M8.500 16L13 21L21 9.500" fill="none" stroke="#1c9c1c" stroke-width="2.400"/><path d="M19 16L29 26" stroke="#585858" stroke-width="2.400"/><path d="M19.500 16.500L28 25" stroke="#e4e4e4" stroke-width=".9"/></svg>
<div class="wt" style="left:72px;top:124px"><b>Tutorials</b>
Go through tutorials</div>
<svg style="left:12px;top:203px" width="36" height="36" viewBox="0 0 36 36"><circle cx="18" cy="18" r="18" fill="#a4b4b9"/><path d="M5 12L11 8L17 11V18L11 21.500L5 18Z" fill="#3c9cec"/><path d="M5 12L11 15L17 11L11 8Z" fill="#8cccfc"/><path d="M11 15V21.500" stroke="#1c6cc4" stroke-width=".8"/><path d="M24 6L31 15L24 22L19 15Z" fill="#3cbc3c"/><path d="M24 6V22" stroke="#8cec8c" stroke-width="1"/><path d="M24 6L19 15L24 22Z" fill="#5cd45c"/><circle cx="18" cy="25.500" r="6" fill="#f8a418"/><ellipse cx="17" cy="23" rx="4" ry="2.500" fill="#fcd478"/></svg>
<div class="wt" style="left:72px;top:206px"><b>Samples</b>
Try out the samples</div>
<svg style="left:12px;top:285px" width="36" height="36" viewBox="0 0 36 36"><circle cx="18" cy="18" r="18" fill="#a4b4b9"/><path d="M18 5.500L21 15L30.500 18L21 21L18 30.500L15 21L5.500 18L15 15Z" fill="#fdf8dc" stroke="#d4a020" stroke-width="1.600"/></svg>
<div class="wt" style="left:72px;top:288px"><b>What's New</b>
Find out what is new</div>
<svg style="left:12px;top:367px" width="36" height="36" viewBox="0 0 36 36"><circle cx="18" cy="18" r="18" fill="#95a5ab"/><path d="M6 25L9 14Q10 10 15 10H22V15H17Q16 15 15.500 17L13.500 25Z" fill="#f4f4f0" stroke="#d4d4cc" stroke-width=".6"/><path d="M19 9.500Q25 9 26 14H29L24.500 19.500L20 14H22.500Q22 12 19 12Z" fill="#f4b428" stroke="#c48c14" stroke-width=".7"/></svg>
<div class="wt" style="left:72px;top:370px"><b>Workbench</b>
Go to the workbench</div>
<!-- eclipse logo -->
<svg style="left:1px;top:440px" width="120" height="80" viewBox="0 0 120 80"><ellipse cx="52" cy="38.500" rx="55" ry="32" fill="url(#gglow2)"/><ellipse cx="31" cy="35" rx="27" ry="24" fill="url(#gglow)" opacity=".9"/><path d="M28 26L20 20M27 28L11.600 26.400M25 44L11.600 49.800M27 50L13.600 63.900M32 52L27.700 63.900" stroke="#fff" stroke-opacity=".7" stroke-width="1.300" fill="none"/><circle cx="41.300" cy="38.200" r="15.600" fill="#c8a0d8" opacity=".7"/><circle cx="41.700" cy="38.200" r="15" fill="url(#gorb)"/><path d="M7 35.300H26M7 38.200H26M7 41.100H26" stroke="#c4ccf4" stroke-width="1.100"/><text x="19.300" y="42.500" font-family="Liberation Sans,sans-serif" font-size="18" letter-spacing="2.300" fill="#4c4c74" opacity=".45">eclipse</text><text x="18.500" y="41.700" font-family="Liberation Sans,sans-serif" font-size="18" letter-spacing="2.300" fill="#f8f8ff">eclipse</text></svg>
</div>
<!--WE1-->
<!--CO0-->
<!-- ===== Console ===== -->
<div class="pnl" style="left:257px;top:670px;width:678px;height:166px;border-radius:7px 7px 0 0"></div>
<svg style="left:257px;top:670px" width="678" height="25" viewBox="0 0 678 25"><path d="M1 23.500H165V7Q165 1 171 1H260C278 1 281 23.500 297 23.500H1Z" fill="none"/><path d="M165.500 24V6Q166 1 171 1H262C280 1 278 23.500 298 23.500H165.500Z" fill="url(#gtab)"/><path d="M.5 23.500H165.500V7Q165.500 .5 172 .5M262 .5C280 .5 278 23.500 298 23.500H677.500" fill="none" stroke="#a0a0a0"/><path d="M98.500 23.500V7Q98.500 .5 105 .5" fill="none" stroke="#a0a0a0"/><path d="M383 .5Q389.500 .5 389.500 7V23.500" fill="none" stroke="#a0a0a0"/></svg>
<svg style="left:262px;top:675px" width="15" height="14" viewBox="0 0 15 14"><path d="M.5 .5H10L13.500 2V13.500H.5Z" fill="#fff" stroke="#a89c78" stroke-width=".9"/><path d="M.5 6.500H9M9 .5V13.500" stroke="#5c6c9c" stroke-width=".9"/><circle cx="4.700" cy="3.500" r="2.300" fill="#e03030"/><path d="M4.700 8L7.500 12.500H2Z" fill="#f8c028" stroke="#c88c14" stroke-width=".6"/></svg>
<div class="t" style="left:281.5px;top:673px;letter-spacing:-0.21px">Problems</div>
<svg style="left:359px;top:674px" width="15" height="15" viewBox="0 0 16 16"><rect x="2.500" y="2.500" width="11" height="13" rx="1" fill="#f4dcb4" stroke="#b48c54" stroke-width=".9"/><rect x="5.500" y=".8" width="5" height="3" rx="1" fill="#a8a8a8" stroke="#686868" stroke-width=".6"/><rect x="4.500" y="5" width="7.500" height="9" fill="#fff"/><path d="M7.500 8H11M7.500 10.500H11" stroke="#5c74b4" stroke-width=".9"/><path d="M1 9L4 12L8 5.500" fill="none" stroke="#1c4cb4" stroke-width="1.700"/></svg>
<div class="t" style="left:379px;top:673px;letter-spacing:-0.64px">Tasks</div>
<svg style="left:427px;top:675px" width="14" height="14" viewBox="0 0 14 14"><rect x="1.200" y="1.200" width="11.600" height="8.300" rx=".8" fill="#dce6f6" stroke="#2c50b0" stroke-width="2.200"/><path d="M3.800 4.200H8.500M3.800 6.500H10" stroke="#2c50b0" stroke-width="1"/><path d="M7 10.500V12M3 12.600H11" stroke="#2c50b0" stroke-width="1.800"/></svg>
<div class="t" style="left:445.6px;top:673px;letter-spacing:-0.28px">Console</div>
<svg style="left:511px;top:677px" width="11" height="11"><use href="#vx"/></svg>
<svg style="left:549px;top:675px" width="14" height="13" viewBox="0 0 14 13"><rect x=".5" y=".5" width="13" height="11" fill="#fff" stroke="#6c7ca4" stroke-width=".9"/><rect x="1" y="1" width="12" height="2.500" fill="#9cb0dc"/><path d="M1 6H13M1 8.500H13M5 3.500V11" stroke="#a4b4d4" stroke-width=".8"/></svg>
<div class="t" style="left:568px;top:673px;letter-spacing:-0.15px">Properties</div>
<svg style="left:900px;top:675px" width="10" height="5"><use href="#vmin"/></svg>
<svg style="left:918px;top:675px" width="11" height="11"><use href="#vmax"/></svg>
<div class="t" style="left:260.7px;top:697px;letter-spacing:-0.38px">CDT Build Console [led]</div>
<!-- console toolbar -->
<svg style="left:675px;top:699px" width="14" height="15" viewBox="0 0 14 15"><path d="M4.500 1H9.500V7.500H13L7 14L1 7.500H4.500Z" fill="url(#garrow)" stroke="#c8860c" stroke-width=".9"/></svg>
<svg style="left:698px;top:699px" width="14" height="15" viewBox="0 0 14 15"><path d="M4.500 14H9.500V7.500H13L7 1L1 7.500H4.500Z" fill="url(#garrow)" stroke="#c8860c" stroke-width=".9"/></svg>
<div class="a" style="left:717px;top:696px;width:23px;height:21px;box-sizing:border-box;background:#c4ddf4;border:1px solid #8cc4f4"></div>
<svg style="left:721px;top:698px" width="17" height="17" viewBox="0 0 17 17"><path d="M1 4.500L5.500 .8V3H12V6H5.500V8.200Z" fill="#fdf0b8" stroke="#c8860c" stroke-width=".9"/><path d="M16 11.500L11.500 7.800V10H4V13H11.500V15.200Z" fill="#fdf0b8" stroke="#c8860c" stroke-width=".9"/></svg>
<div class="a" style="left:743px;top:697px;width:1px;height:18px;background:#a0a0a0"></div>
<svg style="left:752px;top:699px" width="15" height="15" viewBox="0 0 15 15"><rect x=".5" y="1.500" width="9" height="12" fill="#dcdcdc" stroke="#a8a8a8" stroke-width=".9"/><rect x="2.500" y="8" width="5" height="5" fill="#b8b8b8"/><rect x="11" y="1" width="3" height="3" fill="#8c8c8c"/><rect x="11" y="6" width="3" height="3" fill="#8c8c8c"/><rect x="11" y="11" width="3" height="3" fill="#8c8c8c"/></svg>
<svg style="left:775px;top:699px" width="15" height="15" viewBox="0 0 15 15"><rect x=".5" y="1.500" width="9" height="12" fill="#dcdcdc" stroke="#a8a8a8" stroke-width=".9"/><rect x="2.500" y="8.500" width="6" height="5" fill="#f0b428" stroke="#b47c14" stroke-width=".7"/><path d="M3.800 8.500V6.500Q5.500 4.500 7.200 6.500V8.500" fill="none" stroke="#b47c14" stroke-width="1"/><rect x="11" y="1" width="3" height="3" fill="#8c8c8c"/><rect x="11" y="6" width="3" height="3" fill="#8c8c8c"/><rect x="11" y="11" width="3" height="3" fill="#8c8c8c"/></svg>
<svg style="left:798px;top:698px" width="16" height="16" viewBox="0 0 16 16"><path d="M.5 .5H7L10 3.500V12.500H.5Z" fill="#f4f4f4" stroke="#9c9c9c" stroke-width=".9"/><path d="M2.500 5H7.500M2.500 7.500H7.500M2.500 10H6" stroke="#a8a8a8" stroke-width=".9"/><path d="M8.500 9L14.500 15M14.500 9L8.500 15" stroke="#484848" stroke-width="2"/></svg>
<div class="a" style="left:819px;top:697px;width:1px;height:18px;background:#a0a0a0"></div>
<svg style="left:829px;top:698px" width="16" height="16" viewBox="0 0 16 16"><rect x=".5" y="5.500" width="11" height="9" fill="#fff" stroke="#4c6cb4" stroke-width=".9"/><rect x="1" y="6" width="10" height="2.500" fill="#5b8fd6"/><path d="M7 9L12.500 3.500" stroke="#1c7c2c" stroke-width="1.400"/><path d="M10.500 1L15 5.500L13 6L10 3Z" fill="#2c9c3c" stroke="#1c6c24" stroke-width=".7"/></svg>
<svg style="left:853px;top:698px" width="15" height="16" viewBox="0 0 15 16"><rect x="1.200" y="1.200" width="12.300" height="9" rx=".8" fill="#dce6f6" stroke="#2c50b0" stroke-width="2.200"/><path d="M3.800 4.500H9M3.800 7H10.500" stroke="#2c50b0" stroke-width="1"/><path d="M7.300 11V13.200M3 13.800H11.500" stroke="#2c50b0" stroke-width="1.800"/></svg>
<svg style="left:876px;top:704px" width="9" height="5"><use href="#dd"/></svg>
<svg style="left:894px;top:697px" width="17" height="17" viewBox="0 0 17 17"><rect x="1.500" y="4.500" width="12" height="11" fill="#fdfbe8" stroke="#8a7c5c" stroke-width=".9"/><rect x="1" y="4" width="13" height="3" fill="#5b8fd6"/><path d="M13 8V15H6C10 15 13 12 13 8Z" fill="#fff"/><use href="#star" x="9" y="0" width="8" height="8"/></svg>
<svg style="left:917px;top:704px" width="9" height="5"><use href="#dd"/></svg>
<!-- console text -->
<div class="a" style="left:260px;top:719px;width:673px;height:115px;background:#fff;border-top:1px solid #a0a0a0;border-right:1px solid #c8c8c8;box-sizing:border-box;overflow:hidden">
<pre class="mono a" style="left:3px;top:-4px;margin:0">FAST_CWD pointer.  Please report this problem to
the public mailing list cygwin@cygwin.com
[led clean complete]

**** Build Finished ****</pre>
<div class="a" style="left:651px;top:0;width:21px;height:114px;background:#f0f0f0"></div>
<div class="a" style="left:652px;top:71px;width:19px;height:21px;background:#cdcdcd"></div>
<svg style="left:656px;top:7px" width="10" height="7" viewBox="0 0 10 7"><path d="M.8 6L5 1.500L9.200 6" fill="none" stroke="#505050" stroke-width="1.800"/></svg>
<svg style="left:656px;top:99px" width="10" height="7" viewBox="0 0 10 7"><path d="M.8 1L5 5.500L9.200 1" fill="none" stroke="#505050" stroke-width="1.800"/></svg>
</div>
<!--CO1-->
<!--ST0-->
<!-- ===== status bar ===== -->
<svg style="left:6px;top:838px" width="4" height="23"><use href="#grip"/></svg>
<svg style="left:18px;top:842px" width="16" height="15" viewBox="0 0 16 15"><rect x="1.500" y="2.500" width="6" height="11" fill="#f0fbff" stroke="#9c9478" stroke-width=".9"/><rect x="1" y="2" width="7" height="3" fill="#3c7cd0"/><use href="#star" x="8" y="0" width="7.500" height="7.500"/></svg>
<div class="a" style="left:522px;top:838px;width:1px;height:26px;background:#a0a0a0"></div>
<div class="t" style="left:530px;top:842px;letter-spacing:-0.06px">Writable</div>
<div class="a" style="left:641px;top:838px;width:1px;height:26px;background:#a0a0a0"></div>
<div class="t" style="left:649.3px;top:842px;letter-spacing:-0.5px">Smart Insert</div>
<div class="a" style="left:753px;top:838px;width:1px;height:26px;background:#a0a0a0"></div>
<div class="t" style="left:761.6px;top:842px;letter-spacing:-1.06px">52 : 1</div>
<svg style="left:867px;top:838px" width="4" height="23"><use href="#grip"/></svg>
<!--ST1-->
<!-- window borders -->
<div class="a" style="left:1px;top:61px;width:1px;height:805px;background:#fafafa"></div>
<div class="a" style="left:1191px;top:61px;width:1px;height:805px;background:#f8f8f8"></div>
<div class="a" style="left:1px;top:865px;width:1191px;height:1px;background:#fafafa"></div>
<div class="a" style="left:0;top:0;width:1px;height:867px;background:#666"></div>
<div class="a" style="left:0;top:0;width:625px;height:1px;background:#777"></div>
<div class="a" style="left:625px;top:0;width:568px;height:1px;background:#4a2232"></div>
<div class="a" style="left:1192px;top:0;width:1px;height:360px;background:#4a2232"></div>
<div class="a" style="left:1192px;top:360px;width:1px;height:507px;background:#5a5a5a"></div>
<div class="a" style="left:0;top:866px;width:1193px;height:1px;background:#5a5a5a"></div>
</body>
</html>
